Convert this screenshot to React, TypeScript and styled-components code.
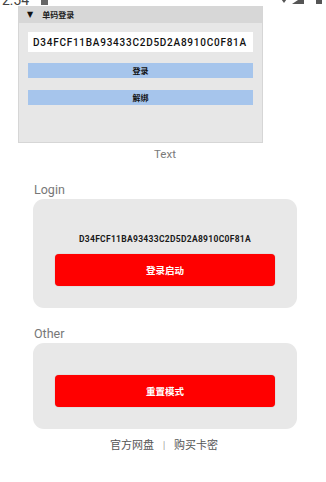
import React from 'react';
import styled, { createGlobalStyle } from 'styled-components';

const GlobalStyle = createGlobalStyle`
  html, body {
    margin: 0;
    padding: 0;
    background: #ffffff;
  }
  body {
    font-family: Roboto, "Noto Sans CJK SC", sans-serif;
    width: 326px;
    height: 482px;
    overflow: hidden;
  }
`;

const CJK = `"Noto Sans CJK SC", "Noto Sans", sans-serif`;

const StatusBar = styled.div`
  height: 6px;
  overflow: hidden;
  display: flex;
  align-items: flex-end;
  justify-content: space-between;
  padding: 0 3px 0 2px;
  color: #555;
`;

const StatusTime = styled.div`
  display: flex;
  align-items: flex-end;
  gap: 12px;
  font-size: 14px;
  line-height: 12px;
  color: #444;
`;

const StatusIcons = styled.div`
  display: flex;
  align-items: flex-end;
  gap: 4px;
`;

const Panel = styled.div`
  margin-left: 18px;
  width: 245px;
  height: 137px;
  box-sizing: border-box;
  background: #e7e7e7;
  border: 1px solid #d6d6d6;
  border-top: none;
  display: flex;
  flex-direction: column;
`;

const PanelHeader = styled.div`
  height: 17px;
  background: #d7d7d7;
  display: flex;
  align-items: center;
  padding-left: 8px;
  gap: 9px;
  font-family: ${CJK};
  font-size: 8px;
  font-weight: 700;
  color: #222;
`;

const Arrow = styled.span`
  font-size: 8px;
  font-family: "DejaVu Sans", sans-serif;
  color: #111;
`;

const CodeInput = styled.div`
  margin: 9px 9px 0;
  height: 20px;
  background: #ffffff;
  display: flex;
  align-items: center;
  padding-left: 5px;
  font-family: Roboto, sans-serif;
  font-size: 10px;
  font-weight: 500;
  letter-spacing: 0.75px;
  color: #111;
  white-space: nowrap;
  overflow: hidden;
`;

const BlueButton = styled.div<{ $top: number }>`
  margin: ${(p) => p.$top}px 9px 0;
  height: 15px;
  background: #a6c5ec;
  display: flex;
  align-items: center;
  justify-content: center;
  font-family: ${CJK};
  font-size: 8px;
  font-weight: 700;
  color: #111;
`;

const Caption = styled.div`
  margin-top: 3px;
  height: 17px;
  line-height: 17px;
  text-align: center;
  padding-left: 4px;
  font-size: 11.5px;
  color: #7a7a7a;
`;

const Section = styled.div`
  padding: 0 29px 0 33px;
`;

const SectionLabel = styled.div<{ $top: number }>`
  margin-top: ${(p) => p.$top}px;
  margin-bottom: 1px;
  padding-left: 1px;
  height: 16px;
  line-height: 16px;
  font-size: 12.5px;
  color: #777;
`;

const Card = styled.div<{ $padTop: number }>`
  background: #e8e8e8;
  border-radius: 11px;
  padding: ${(p) => p.$padTop}px 22px 22px;
  display: flex;
  flex-direction: column;
`;

const CardCode = styled.div`
  height: 20px;
  line-height: 20px;
  margin-bottom: 5px;
  text-align: center;
  font-family: Roboto, sans-serif;
  font-size: 8.5px;
  font-weight: 700;
  letter-spacing: 0.3px;
  color: #1a1a1a;
`;

const RedButton = styled.div`
  height: 32px;
  border-radius: 4px;
  background: #ff0000;
  display: flex;
  align-items: center;
  justify-content: center;
  font-family: ${CJK};
  font-size: 9.5px;
  font-weight: 700;
  color: #ffffff;
  box-shadow: 0 0 1px rgba(120, 0, 0, 0.4);
`;

const Footer = styled.div`
  margin-top: 7px;
  display: flex;
  justify-content: center;
  align-items: center;
  gap: 9px;
  padding-left: 2px;
  height: 16px;
  font-family: ${CJK};
  font-size: 11px;
  color: #555;
`;

const Sep = styled.span`
  font-size: 8px;
  color: #777;
`;

const StatusGlyphs = () => (
  <svg width="44" height="10" viewBox="0 0 44 10">
    <path d="M0 0 L10 0 L5 7 Z" fill="#555" />
    <path d="M13 8 L25 0 L25 8 Z" fill="#555" />
    <rect x="37" y="0" width="6" height="8" rx="0.5" fill="#555" />
  </svg>
);

export default function App() {
  const code = 'D34FCF11BA93433C2D5D2A8910C0F81A';
  return (
    <>
      <GlobalStyle />
      <StatusBar>
        <StatusTime>
          <span>2:54</span>
          <svg width="8" height="6" viewBox="0 0 8 6">
            <rect x="0" y="0" width="7" height="5" fill="#666" />
          </svg>
        </StatusTime>
        <StatusIcons>
          <StatusGlyphs />
        </StatusIcons>
      </StatusBar>

      <Panel>
        <PanelHeader>
          <Arrow>▼</Arrow>
          <span>单码登录</span>
        </PanelHeader>
        <CodeInput>{code}</CodeInput>
        <BlueButton $top={11}>登录</BlueButton>
        <BlueButton $top={12}>解绑</BlueButton>
      </Panel>

      <Caption>Text</Caption>

      <Section>
        <SectionLabel $top={19}>Login</SectionLabel>
        <Card $padTop={30}>
          <CardCode>{code}</CardCode>
          <RedButton>登录启动</RedButton>
        </Card>

        <SectionLabel $top={18}>Other</SectionLabel>
        <Card $padTop={32}>
          <RedButton>重置模式</RedButton>
        </Card>
      </Section>

      <Footer>
        <span>官方网盘</span>
        <Sep>|</Sep>
        <span>购买卡密</span>
      </Footer>
    </>
  );
}
